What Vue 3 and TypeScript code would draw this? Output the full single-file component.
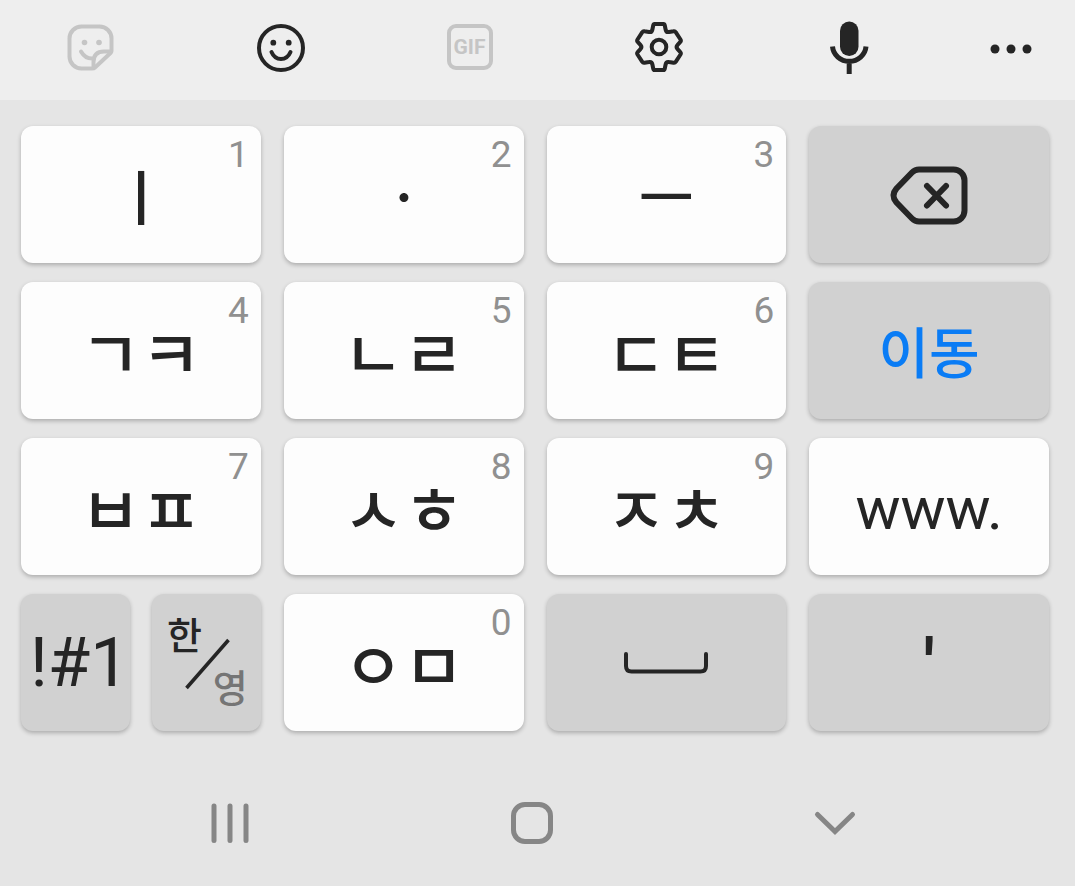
<script setup lang="ts">
interface Key {
  id: string
  label?: string
  digit?: string
  kind: 'vowel' | 'jamo' | 'delete' | 'go' | 'web' | 'split' | 'space' | 'quote'
  name?: string
}

const keys: Key[] = [
  { id: 'i', label: 'ㅣ', digit: '1', kind: 'vowel' },
  { id: 'dot', label: 'ㆍ', digit: '2', kind: 'vowel' },
  { id: 'eu', label: 'ㅡ', digit: '3', kind: 'vowel' },
  { id: 'delete', kind: 'delete', name: 'Delete' },
  { id: 'gk', label: 'ㄱㅋ', digit: '4', kind: 'jamo' },
  { id: 'nr', label: 'ㄴㄹ', digit: '5', kind: 'jamo' },
  { id: 'dt', label: 'ㄷㅌ', digit: '6', kind: 'jamo' },
  { id: 'go', label: '이동', kind: 'go' },
  { id: 'bp', label: 'ㅂㅍ', digit: '7', kind: 'jamo' },
  { id: 'sh', label: 'ㅅㅎ', digit: '8', kind: 'jamo' },
  { id: 'jc', label: 'ㅈㅊ', digit: '9', kind: 'jamo' },
  { id: 'web', label: 'www.', kind: 'web' },
  { id: 'split', kind: 'split' },
  { id: 'om', label: 'ㅇㅁ', digit: '0', kind: 'jamo' },
  { id: 'space', kind: 'space', name: 'Space' },
  { id: 'quote', label: "'", kind: 'quote' },
]

const darkKinds = ['delete', 'go', 'space', 'quote']
</script>

<template>
  <main class="keyboard">
    <header class="toolbar">
      <div class="tools">
        <button class="tool faded" type="button" aria-label="Stickers">
          <svg viewBox="0 0 52 52" fill="none" stroke="currentColor" stroke-width="4" stroke-linejoin="round" stroke-linecap="round">
            <path d="M28 48.500H17.500a12 12 0 0 1-12-12V18.500a12 12 0 0 1 12-12h18a12 12 0 0 1 12 12V31q0 1-1 2L31 47.500q-1 1-3 1Z" />
            <path d="M47 31.500H40q-10.500 0-10.500 10.500V48M17 31.500q4.500 8 13 7" />
            <circle cx="20.500" cy="22.500" r="2.800" fill="currentColor" stroke="none" />
            <circle cx="35" cy="22.500" r="2.800" fill="currentColor" stroke="none" />
          </svg>
        </button>
        <button class="tool" type="button" aria-label="Emoji">
          <svg viewBox="0 0 52 52" fill="none" stroke="currentColor" stroke-width="4" stroke-linecap="round">
            <circle cx="27" cy="27" r="22" />
            <path d="M17.500 31q3 7 9.500 7t9.500-7" />
            <circle cx="19.300" cy="21.700" r="2.900" fill="currentColor" stroke="none" />
            <circle cx="34.700" cy="21.700" r="2.900" fill="currentColor" stroke="none" />
          </svg>
        </button>
        <button class="tool faded" type="button"><span class="gif">GIF</span></button>
        <button class="tool" type="button" aria-label="Settings">
          <svg viewBox="0 0 52 52" fill="none" stroke="currentColor" stroke-width="4" stroke-linejoin="round">
            <path d="M21.500 3H30.500Q31.500 3 31.800 4.500L32.600 8.500Q33.200 11.500 36 11L40.500 10.300Q42 10 42.700 11.200L47.500 18.500Q48.300 19.800 47.300 20.900L44.600 23.800Q42.600 26 44.600 28.200L47.300 31.100Q48.300 32.200 47.500 33.500L42.700 40.800Q42 42 40.500 41.700L36 41Q33.200 40.500 32.600 43.500L31.800 47.500Q31.500 49 30.500 49H21.500Q20.500 49 20.200 47.500L19.400 43.500Q18.800 40.500 16 41L11.500 41.700Q10 42 9.300 40.800L4.500 33.500Q3.700 32.200 4.700 31.100L7.400 28.200Q9.400 26 7.400 23.800L4.700 20.900Q3.700 19.800 4.500 18.500L9.300 11.200Q10 10 11.500 10.300L16 11Q18.800 11.500 19.400 8.500L20.200 4.500Q20.500 3 21.500 3Z" />
            <circle cx="26" cy="26" r="7.300" />
          </svg>
        </button>
        <button class="tool" type="button" aria-label="Voice input">
          <svg viewBox="0 0 52 52" fill="none" stroke="currentColor" stroke-width="5">
            <rect x="17" y="0.500" width="18.500" height="34.500" rx="9.200" fill="currentColor" stroke="none" />
            <path d="M9.500 25.500a16.800 16 0 0 0 33.500 0M26.200 41v12" />
          </svg>
        </button>
      </div>
      <button class="tool" type="button" aria-label="More">
        <svg viewBox="0 0 52 52" fill="currentColor">
          <circle cx="10" cy="28" r="4.500" /><circle cx="26" cy="28" r="4.500" /><circle cx="42" cy="28" r="4.500" />
        </svg>
      </button>
    </header>

    <section class="keys">
      <template v-for="key in keys" :key="key.id">
        <div v-if="key.kind === 'split'" class="split">
          <button class="key dark symbols" type="button">!#1</button>
          <button class="key dark language" type="button">
            <span class="korean">한</span>
            <svg class="slash" viewBox="0 0 46 50" fill="none" stroke="currentColor" stroke-width="3.500"><path d="M1.500 49L43.500 1" /></svg>
            <span class="english">영</span>
          </button>
        </div>
        <button
          v-else
          class="key"
          :class="[key.kind, { dark: darkKinds.includes(key.kind) }]"
          type="button"
          :aria-label="key.name"
        >
          <span v-if="key.label">{{ key.label }}</span>
          <span v-if="key.digit" class="digit">{{ key.digit }}</span>
          <svg v-if="key.kind === 'delete'" class="delete-icon" viewBox="0 0 78 60" fill="none" stroke="currentColor" stroke-width="6" stroke-linecap="round" stroke-linejoin="round">
            <path d="M29 4.500H63.500a11 11 0 0 1 11 11V45.500a11 11 0 0 1-11 11H29q-4 0-7-3L6.500 37.500q-6-7 0-14L22 7.500q3-3 7-3Z" />
            <path d="M37 21L56 40.500M56 21L37 40.500" />
          </svg>
          <svg v-if="key.kind === 'space'" class="space-icon" viewBox="0 0 84 22" fill="none" stroke="currentColor" stroke-width="4" stroke-linecap="round">
            <path d="M2 2V14q0 5.500 5.500 5.500h69q5.500 0 5.500-5.500V2" />
          </svg>
        </button>
      </template>
    </section>

    <nav class="system">
      <button type="button" aria-label="Recent apps">
        <svg viewBox="0 0 60 60" fill="none" stroke="currentColor" stroke-width="5" stroke-linecap="round"><path d="M14 13v34.500M30 13v34.500M46 13v34.500" /></svg>
      </button>
      <button type="button" aria-label="Home">
        <svg viewBox="0 0 60 60" fill="none" stroke="currentColor" stroke-width="5"><rect x="11.500" y="11.500" width="37" height="37" rx="11.500" /></svg>
      </button>
      <button type="button" aria-label="Hide keyboard">
        <svg viewBox="0 0 60 60" fill="none" stroke="currentColor" stroke-width="5" stroke-linecap="round"><path d="M12.500 21.500L30 38.500L47.500 21.500" /></svg>
      </button>
    </nav>
  </main>
</template>

<style>
body {
  margin: 0;
  background: #e5e5e5;
}
</style>

<style scoped>
.keyboard {
  min-height: 100vh;
  background: #e5e5e5;
  color: #252525;
  font-family: Roboto, "Noto Sans CJK KR", sans-serif;
}
button {
  margin: 0;
  padding: 0;
  border: 0;
  background: none;
  color: inherit;
  font: inherit;
  cursor: pointer;
}
svg {
  display: block;
  overflow: visible;
}
.toolbar {
  display: flex;
  align-items: center;
  gap: 110px;
  box-sizing: border-box;
  height: 100px;
  padding: 0 38px 6px 64px;
  background: #eeeeee;
}
.tools {
  display: flex;
  flex: 1;
  justify-content: space-between;
}
.tool {
  display: grid;
  place-items: center;
  width: 52px;
  height: 52px;
}
.tool svg {
  width: 52px;
  height: 52px;
}
.tool.faded {
  color: #c5c5c5;
}
.faded svg {
  margin-top: -2px;
}
.gif {
  box-sizing: border-box;
  width: 46px;
  height: 46px;
  border: 4px solid currentColor;
  border-radius: 9px;
  font-size: 21px;
  font-weight: 700;
  line-height: 39px;
  text-align: center;
}
.keys {
  display: grid;
  grid-template-columns: repeat(4, 1fr);
  grid-auto-rows: 137px;
  gap: 19px 23px;
  padding: 26px 26px 0 21px;
}
.split {
  display: grid;
  grid-template-columns: 1fr 1fr;
  gap: 22px;
}
.key {
  position: relative;
  display: grid;
  place-items: center;
  min-width: 0;
  border-radius: 12px;
  background: #fdfdfd;
  box-shadow: 0 2px 4px rgba(0, 0, 0, 0.25);
  white-space: nowrap;
}
.key.dark {
  background: #d1d1d1;
}
.vowel,
.jamo,
.go {
  padding-bottom: 2px;
  font-family: "Noto Sans CJK KR", sans-serif;
  font-weight: 500;
  line-height: 80px;
}
.vowel {
  font-size: 60px;
}
.jamo {
  font-size: 66px;
}
.go {
  padding-bottom: 4px;
  color: #0a7cf5;
  font-size: 55px;
}
.digit {
  position: absolute;
  top: 9px;
  right: 12px;
  color: #909090;
  font-family: Roboto, sans-serif;
  font-size: 37px;
  font-weight: 400;
  line-height: 40px;
}
.web {
  padding-top: 4px;
  font-size: 60px;
}
.symbols {
  padding-left: 8px;
  font-size: 69px;
}
.quote {
  padding-top: 8px;
  font-size: 76px;
  font-weight: 500;
}
.delete-icon {
  width: 78px;
  height: 60px;
}
.space-icon {
  width: 84px;
  height: 22px;
}
.language {
  font-family: "Noto Sans CJK KR", sans-serif;
  font-size: 38px;
  font-weight: 500;
  line-height: 40px;
}
.korean,
.english,
.slash {
  position: absolute;
}
.korean {
  top: 19px;
  left: 15px;
}
.english {
  right: 13px;
  bottom: 25px;
  color: #757575;
}
.slash {
  top: 45px;
  left: 33px;
  width: 46px;
  height: 50px;
}
.system {
  display: grid;
  grid-template-columns: repeat(3, 1fr);
  padding: 62px 89px 33px 79px;
  color: #868686;
}
.system button {
  justify-self: center;
}
.system svg {
  width: 60px;
  height: 60px;
}
</style>
